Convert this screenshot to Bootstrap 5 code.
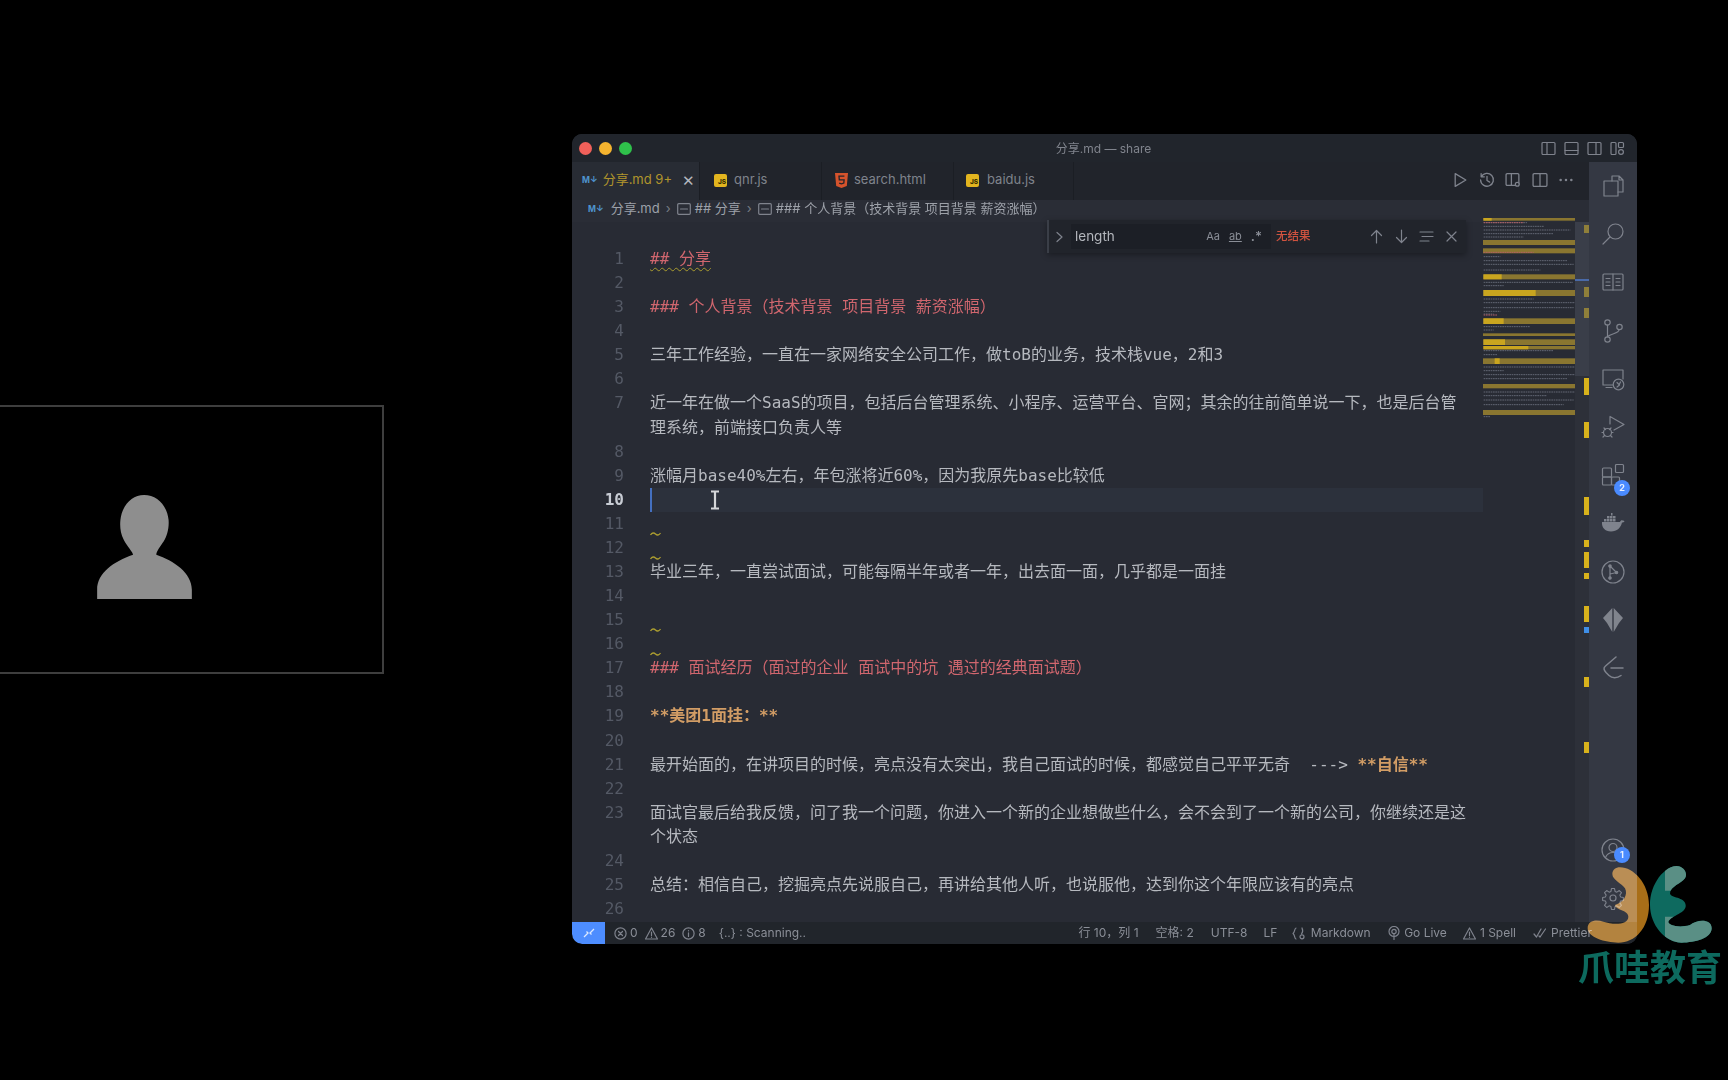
<!DOCTYPE html>
<html lang="zh-CN">
<head>
<meta charset="utf-8">
<title>分享.md — share</title>
<link rel="stylesheet" href="https://cdn.jsdelivr.net/npm/bootstrap@5.3.0/dist/css/bootstrap.min.css">
<style>
html,body{height:1080px;overflow:hidden;background:#000}
body{font-family:Inter,"Noto Sans CJK SC",sans-serif;width:1728px;position:relative}
.stage{height:1080px;margin-left:-96px}
.cam{width:480px;height:269px;margin-top:404.5px;border:2px solid #3e3e3e;padding-top:16px;flex:none}
.cam svg{width:95px;height:104px}
.win{width:1065px;height:810px;margin-top:134px;margin-left:188px;background:#282c34;border-radius:10px;overflow:hidden;flex:none;filter:blur(.45px);color:#8b8f98;font-size:13px}
.ttl{height:28px;background:#21252c;padding:1px 12px 0 7px;position:relative}
.dot{width:13px;height:13px;border-radius:50%;margin-right:7px}
.ttl-text{position:absolute;left:-2px;right:0;text-align:center;color:#80848d;font-size:12px}
.lay{gap:8px}
.ico{stroke:#7f838d;fill:none;stroke-width:1.2;stroke-linecap:round;stroke-linejoin:round}
.tabs{height:38px;background:#21242b}
.tabx{height:38px;border-right:1px solid #1b1e24;padding:0 0 2px 10px;color:#7f838c;font-size:13px;flex:none;white-space:nowrap}
.tabx.on{background:#282c34;color:#b1952c}
.tabx .close{color:#b4b7bd;font-size:15px;margin-left:10px;line-height:1}
.md{color:#4f94cf;font-size:8.5px;font-weight:700;line-height:1}
.jsi{width:13px;height:13px;background:#e3b51f;border-radius:2px;color:#3a3000;font-size:6.5px;font-weight:800;line-height:1;display:flex;align-items:flex-end;justify-content:flex-end;padding:0 1px 1px 0;flex:none}
.actions{gap:10.5px;padding:0 15px 2px 0}
.crumbs{height:22px;background:#2a2d36;padding:0 0 4px 16px;font-size:13px;color:#9da1a9;white-space:pre}
.crumbs .sep{margin:0 6px;color:#777b84}
.ed{height:700px;position:relative;background:#282b34}
.code{width:911px;padding-top:25px;overflow:hidden;font-family:"DejaVu Sans Mono","Noto Sans CJK SC",monospace;font-size:16px;line-height:24.08px;color:#b6b9bf;flex:none}
.ln{display:flex;white-space:pre;min-height:24.08px}
.num{width:52px;text-align:right;color:#545965;flex:none;margin-right:26px}
.cnt{flex:1 1 auto}
.rd{color:#d0666e}
.og{color:#d29d65;font-weight:700}
.cur{background:#2c313c;box-shadow:inset 2px 0 0 #4470c0}
.num.now{color:#c8ccd4;font-weight:700}
.squig{text-decoration:underline wavy #a89b2f 1px;text-underline-offset:3px}
.tild{display:block;width:11px;height:2px;margin-top:21px;overflow:visible}
.mini{width:92px;flex:none;margin-top:-4px;position:relative}
.mini svg,.ruler svg{display:block}
.ruler{width:14px;flex:none}
.find{position:absolute;left:475px;top:-2px;width:419px;height:33px;background:#21242b;border-left:2px solid #3a3e47;box-shadow:0 2px 6px rgba(0,0,0,.35);padding-left:6px;font-size:13.5px}
.fld{width:200px;height:25px;background:#1c1f26;margin-left:7px;color:#b4b7bd;padding:0 9px 0 4px;font-size:13.5px;flex:none}
.opt{font-size:11px;color:#8a8e97;margin-left:9px}
.regex{font-size:13px;font-weight:600;line-height:1}
.nores{color:#d0533f;font-size:11.5px;font-weight:500;margin-left:5px}
.ftools{margin-left:auto;padding-right:7px}
.ftools svg{margin-left:10px}
.actbar{width:48px;background:#343843;flex:none}
.ab{height:48.2px;width:48px;flex:none;position:relative}
.bdg{position:absolute;right:7px;top:29px;width:16px;height:16px;border-radius:50%;background:#4a8bff;color:#e8f0ff;font-size:9px;font-weight:700;text-align:center;line-height:16px}
.sbar{height:22px;background:#21252b;font-size:12px;color:#8b8f98;white-space:pre}
.rem{width:33px;height:22px;background:#4d8dff;border-bottom-left-radius:10px;flex:none}
.stl{margin-left:8px;gap:3px}
.stl .txt{margin-right:4px}
.str{margin-left:auto}
.logo{position:absolute;left:1575px;top:860px;width:150px;height:125px;mix-blend-mode:screen}
.logotext{position:absolute;left:1578px;top:946px;font-family:"Noto Sans CJK SC",sans-serif;font-size:36px;line-height:38px;font-weight:700;color:#0d6a5e;white-space:nowrap}
.beam{position:absolute;left:60px;top:2px}
.beamwrap{position:relative;display:block;height:24px}
</style>
</head>
<body>
<div class="stage d-flex align-items-start">
  <div class="cam d-flex justify-content-center align-items-center">
    <svg viewBox="290 315 285 313"><path fill="#8e8e8e" d="M290 628L290 600C290 550 340 515 398 495C398 488 380 470 370 450C360 430 358 410 360 390C365 345 395 315 431 315C470 315 500 345 505 390C507 415 500 440 490 455C480 470 468 485 468 495C520 512 575 550 575 600L575 628Z"/></svg>
  </div>
  <div class="win d-flex flex-column">
    <div class="ttl d-flex align-items-center">
      <span class="dot" style="background:#f0605a"></span>
      <span class="dot" style="background:#f5b42f"></span>
      <span class="dot" style="background:#2fc14b"></span>
      <div class="ttl-text">分享.md — share</div>
      <div class="lay d-flex ms-auto align-items-center" style="position:relative">
        <svg class="ico" width="15" height="15" viewBox="0 0 15 15"><rect x="1" y="1.5" width="13" height="12" rx="1"/><path d="M6 1.5v12"/></svg>
        <svg class="ico" width="15" height="15" viewBox="0 0 15 15"><rect x="1" y="1.5" width="13" height="12" rx="1"/><path d="M1 9.5h13"/></svg>
        <svg class="ico" width="15" height="15" viewBox="0 0 15 15"><rect x="1" y="1.5" width="13" height="12" rx="1"/><path d="M9 1.5v12"/></svg>
        <svg class="ico" width="15" height="15" viewBox="0 0 15 15"><rect x="1" y="1.5" width="5" height="12" rx="1"/><rect x="8.5" y="1.5" width="5" height="5" rx="1"/><circle cx="11" cy="11" r="2.4"/></svg>
      </div>
    </div>
    <div class="d-flex flex-grow-1" style="min-height:0">
      <div class="d-flex flex-column" style="width:1017px">
        <div class="tabs d-flex align-items-center">
          <div class="tabx on d-flex align-items-center" style="width:128px"><span class="md">M↓</span><span style="margin-left:5px">分享.md 9+</span><span class="close">✕</span></div>
          <div class="tabx d-flex align-items-center" style="width:122px;padding-left:14px"><span class="jsi">JS</span><span style="margin-left:7px">qnr.js</span></div>
          <div class="tabx d-flex align-items-center" style="width:132px;padding-left:13px"><svg width="13" height="15" viewBox="0 0 13 15"><path fill="#d5532c" d="M0 0h13l-1.200 13L6.500 15 1.200 13z"/><path fill="none" stroke="#21242b" stroke-width="1.300" d="M9.400 3.200H4l.3 3.600h4.800l-.3 3.300-2.300.8-2.300-.8"/></svg><span style="margin-left:6px">search.html</span></div>
          <div class="tabx d-flex align-items-center" style="width:120px;padding-left:12px"><span class="jsi">JS</span><span class="ms-2">baidu.js</span></div>
          <div class="actions d-flex ms-auto align-items-center">
            <svg class="ico" width="16" height="16" viewBox="0 0 15 15"><path d="M3 1.500l10 6-10 6z"/></svg>
            <svg class="ico" width="16" height="16" viewBox="0 0 15 15"><path d="M2.200 4.500A6 6 0 1 1 1.500 7.500M2 1.500v3h3M7.500 4v4l2.500 1.500"/></svg>
            <svg class="ico" width="16" height="16" viewBox="0 0 15 15"><rect x="1" y="1.500" width="12" height="11" rx="1"/><path d="M6 1.500v11"/><circle cx="11.500" cy="11.500" r="1.800" fill="#21242b"/></svg>
            <svg class="ico" width="16" height="16" viewBox="0 0 15 15"><rect x="1" y="1.500" width="13" height="12" rx="1"/><path d="M7.500 1.500v12"/></svg>
            <svg class="ico" width="16" height="16" viewBox="0 0 15 15"><circle cx="2.500" cy="7.500" r=".6"/><circle cx="7.500" cy="7.500" r=".6"/><circle cx="12.500" cy="7.500" r=".6"/></svg>
          </div>
        </div>
        <div class="crumbs d-flex align-items-center"><span class="md" style="margin-right:7px">M↓</span><span>分享.md</span><span class="sep">›</span><svg class="ico me-1" width="14" height="12" viewBox="0 0 14 12"><rect x=".7" y=".7" width="12.600" height="10.600" rx="1"/><path d="M3.500 6h7"/></svg><span>## 分享</span><span class="sep">›</span><svg class="ico me-1" width="14" height="12" viewBox="0 0 14 12"><rect x=".7" y=".7" width="12.600" height="10.600" rx="1"/><path d="M3.500 6h7"/></svg><span>### 个人背景（技术背景 项目背景 薪资涨幅）</span></div>
        <div class="ed d-flex">
          <div class="code">
            <div class="ln"><span class="num">1</span><span class="cnt rd"><span class="squig">## 分享</span></span></div>
            <div class="ln"><span class="num">2</span><span class="cnt"></span></div>
            <div class="ln"><span class="num">3</span><span class="cnt rd">### 个人背景（技术背景 项目背景 薪资涨幅）</span></div>
            <div class="ln"><span class="num">4</span><span class="cnt"></span></div>
            <div class="ln"><span class="num">5</span><span class="cnt">三年工作经验，一直在一家网络安全公司工作，做toB的业务，技术栈vue，2和3</span></div>
            <div class="ln"><span class="num">6</span><span class="cnt"></span></div>
            <div class="ln"><span class="num">7</span><span class="cnt">近一年在做一个SaaS的项目，包括后台管理系统、小程序、运营平台、官网；其余的往前简单说一下，也是后台管<br>理系统，前端接口负责人等</span></div>
            <div class="ln"><span class="num">8</span><span class="cnt"></span></div>
            <div class="ln"><span class="num">9</span><span class="cnt">涨幅月base40%左右，年包涨将近60%，因为我原先base比较低</span></div>
            <div class="ln"><span class="num now">10</span><span class="cnt cur"><span class="beamwrap"><svg class="beam" width="10" height="20" viewBox="0 0 10 20"><path fill="none" stroke="#d4d6d9" stroke-width="2.200" d="M1 1.500h8M5 1.500v17M1 18.500h8"/></svg></span></span></div>
            <div class="ln"><span class="num">11</span><span class="cnt"><svg class="tild" viewBox="0 0 11 2"><path fill="none" stroke="#ab9d30" stroke-width="1.300" d="M.5 2C2 -.5 4 -.5 5.500 1S9 2.500 10.500 0"/></svg></span></div>
            <div class="ln"><span class="num">12</span><span class="cnt"><svg class="tild" viewBox="0 0 11 2"><path fill="none" stroke="#ab9d30" stroke-width="1.300" d="M.5 2C2 -.5 4 -.5 5.500 1S9 2.500 10.500 0"/></svg></span></div>
            <div class="ln"><span class="num">13</span><span class="cnt">毕业三年，一直尝试面试，可能每隔半年或者一年，出去面一面，几乎都是一面挂</span></div>
            <div class="ln"><span class="num">14</span><span class="cnt"></span></div>
            <div class="ln"><span class="num">15</span><span class="cnt"><svg class="tild" viewBox="0 0 11 2"><path fill="none" stroke="#ab9d30" stroke-width="1.300" d="M.5 2C2 -.5 4 -.5 5.500 1S9 2.500 10.500 0"/></svg></span></div>
            <div class="ln"><span class="num">16</span><span class="cnt"><svg class="tild" viewBox="0 0 11 2"><path fill="none" stroke="#ab9d30" stroke-width="1.300" d="M.5 2C2 -.5 4 -.5 5.500 1S9 2.500 10.500 0"/></svg></span></div>
            <div class="ln"><span class="num">17</span><span class="cnt rd">### 面试经历（面过的企业 面试中的坑 遇过的经典面试题）</span></div>
            <div class="ln"><span class="num">18</span><span class="cnt"></span></div>
            <div class="ln"><span class="num">19</span><span class="cnt og">**美团1面挂：**</span></div>
            <div class="ln"><span class="num">20</span><span class="cnt"></span></div>
            <div class="ln"><span class="num">21</span><span class="cnt">最开始面的，在讲项目的时候，亮点没有太突出，我自己面试的时候，都感觉自己平平无奇  ---&gt; <span class="og">**自信**</span></span></div>
            <div class="ln"><span class="num">22</span><span class="cnt"></span></div>
            <div class="ln"><span class="num">23</span><span class="cnt">面试官最后给我反馈，问了我一个问题，你进入一个新的企业想做些什么，会不会到了一个新的公司，你继续还是这<br>个状态</span></div>
            <div class="ln"><span class="num">24</span><span class="cnt"></span></div>
            <div class="ln"><span class="num">25</span><span class="cnt">总结：相信自己，挖掘亮点先说服自己，再讲给其他人听，也说服他，达到你这个年限应该有的亮点</span></div>
            <div class="ln"><span class="num">26</span><span class="cnt"></span></div>
          </div>
          <div class="mini">
            <svg width="92" height="200" viewBox="0 0 276 600">
              <g fill="#8a7630"><rect y="0" width="276" height="8"/><rect y="66" width="276" height="15"/><rect y="91" width="276" height="15"/><rect y="169" width="276" height="15"/><rect y="216" width="276" height="18"/><rect y="301" width="276" height="17"/><rect y="346" width="276" height="8"/><rect y="364" width="276" height="17"/><rect y="384" width="276" height="10"/><rect y="421" width="276" height="17"/><rect y="498" width="276" height="13"/><rect y="576" width="276" height="15"/></g>
              <g fill="#c9a51f"><rect x="2" y="0" width="24" height="8"/><rect x="2" y="169" width="54" height="15"/><rect x="2" y="216" width="156" height="18"/><rect x="2" y="301" width="60" height="17"/><rect x="2" y="364" width="64" height="17"/><rect x="2" y="384" width="134" height="10"/><rect x="35" y="421" width="15" height="17"/></g>
              <g stroke="#626773" stroke-width="3" stroke-dasharray="5 2" fill="none"><path d="M2 14h130M2 25h180M2 36h260M2 47h210M2 57h120M2 116h50M2 128h250M2 139h270M2 156h170M2 193h268M2 203h60M2 243h150M2 254h274M2 269h270M2 280h50M2 288h30M2 326h140M2 336h30M2 398h210M2 410h40M2 447h274M2 458h60M2 470h274M2 482h250M2 522h274M2 533h190M2 546h270M2 560h240M2 596h20"/></g>
              <g stroke="#b05e64" stroke-width="3" stroke-dasharray="5 2" fill="none"><path d="M2 14h120M2 103h150M2 291h40"/></g>
            </svg>
          </div>
          <div class="ruler">
            <svg width="14" height="700" viewBox="0 0 14 700">
              <rect width="14" height="700" fill="#2d3039"/><rect y="0" width="14" height="154" fill="#3a3e49"/><rect y="57" width="14" height="2" fill="#4a6aa8"/>
              <g fill="#8f7f3a"><rect x="9" y="3" width="5" height="8"/><rect x="9" y="65" width="5" height="10"/><rect x="9" y="86" width="5" height="10"/></g>
              <g fill="#d8b21c"><rect x="9" y="156" width="5" height="17"/><rect x="9" y="200" width="5" height="16"/><rect x="9" y="275" width="5" height="18"/><rect x="9" y="318" width="5" height="7"/><rect x="9" y="330" width="5" height="16"/><rect x="9" y="351" width="5" height="6"/><rect x="9" y="384" width="5" height="16"/><rect x="9" y="455" width="5" height="10"/><rect x="9" y="520" width="5" height="11"/></g>
              <rect x="9" y="405" width="5" height="6" fill="#3f8fe8"/>
            </svg>
          </div>
          <div class="find d-flex align-items-center">
            <svg class="ico" width="9" height="12" viewBox="0 0 9 12"><path d="M2 1.500l5 4.500-5 4.500"/></svg>
            <div class="fld d-flex align-items-center"><span>length</span><span class="opt ms-auto">Aa</span><span class="opt text-decoration-underline">ab</span><span class="opt regex">.*</span></div>
            <span class="nores">无结果</span>
            <div class="ftools d-flex align-items-center">
              <svg class="ico" width="15" height="15" viewBox="0 0 15 15"><path d="M7.500 14V1.500M2.500 6.500l5-5 5 5"/></svg>
              <svg class="ico" width="15" height="15" viewBox="0 0 15 15"><path d="M7.500 1v12.500M2.500 8.500l5 5 5-5"/></svg>
              <svg class="ico" width="15" height="15" viewBox="0 0 15 15"><path d="M1 3h13M3 7.500h11M1 12h9"/></svg>
              <svg class="ico" width="15" height="15" viewBox="0 0 15 15"><path d="M3 3l9 9M12 3l-9 9"/></svg>
            </div>
          </div>
        </div>
      </div>
      <div class="actbar d-flex flex-column">
        <div class="ab d-flex align-items-center justify-content-center"><svg class="ico" width="24" height="24" viewBox="0 0 24 24"><path d="M11 2h7l4 4v12h-5M11 2v5M18 2v4h4"/><path d="M8 7h9v15H3V7h5z"/></svg></div>
        <div class="ab d-flex align-items-center justify-content-center"><svg class="ico" width="24" height="24" viewBox="0 0 24 24"><circle cx="14.500" cy="9.500" r="7.500"/><path d="M9 15l-7 7"/></svg></div>
        <div class="ab d-flex align-items-center justify-content-center"><svg class="ico" width="24" height="24" viewBox="0 0 24 24"><rect x="2" y="4" width="20" height="16" rx="1"/><path d="M12 4v16M5 8.500h4M5 12h4M5 15.500h4M15 8.500h4M15 12h4M15 15.500h4"/></svg></div>
        <div class="ab d-flex align-items-center justify-content-center"><svg class="ico" width="24" height="24" viewBox="0 0 24 24"><circle cx="6.500" cy="3.500" r="2.700"/><circle cx="6.500" cy="20.500" r="2.700"/><circle cx="18.500" cy="8" r="2.700"/><path d="M6.500 6.200v11.600M18 10.700c0 4-8 3.500-11.500 7"/></svg></div>
        <div class="ab d-flex align-items-center justify-content-center"><svg class="ico" width="24" height="24" viewBox="0 0 24 24"><path d="M12 18H2V3h20v9M5 20.500h6"/><circle cx="17.500" cy="17.500" r="5.300"/><path d="M16 15.500l2.500 2.500-2.500 2M19.500 15l-1 2"/></svg></div>
        <div class="ab d-flex align-items-center justify-content-center"><svg class="ico" width="24" height="24" viewBox="0 0 24 24"><path d="M9 1.500L23 9.500l-10 5.500M9 1.500V9"/><circle cx="6.500" cy="17.500" r="4"/><path d="M3 13l1.500 1.500M10 13l-1.500 1.500M1 17.500h1.500M10.500 17.500H12M2 22l1.500-1.500M11 22l-1.500-1.500"/></svg></div>
        <div class="ab d-flex align-items-center justify-content-center"><svg class="ico" width="24" height="24" viewBox="0 0 24 24"><rect x="1.500" y="5" width="9" height="9" rx="1"/><rect x="1.500" y="14" width="9" height="8" rx="1"/><rect x="10.500" y="14" width="8" height="8" rx="1"/><rect x="14.500" y="1.500" width="8" height="8" rx="1"/></svg><span class="bdg">2</span></div>
        <div class="ab d-flex align-items-center justify-content-center"><svg width="24" height="20" viewBox="0 0 24 20"><path fill="#7f838d" d="M1 9h18c.5-1.500 1.800-2 2.500-1.500.8-.2 1.500 0 2 .7-.7 1-1.500 1.300-2.500 1.300-1 5-5 9-11 9C4 18.500 .5 14.500 1 9zM3 6h2.500v2.500H3zM6 6h2.500v2.500H6zM9 6h2.500v2.500H9zM12 6h2.500v2.500H12zM6 3h2.500v2.500H6zM9 3h2.500v2.500H9zM12 3h2.500v2.500H12zM10 0h1.500v2.500H10z"/></svg></div>
        <div class="ab d-flex align-items-center justify-content-center"><svg class="ico" width="24" height="24" viewBox="0 0 24 24"><circle cx="12" cy="12" r="11"/><path d="M9 6l6.500 6.500M9 6v12M9 14l6.500-1.500"/><circle cx="9" cy="6" r="1.200" fill="#7f838d"/><circle cx="9" cy="18" r="1.200" fill="#7f838d"/><circle cx="15.500" cy="12.500" r="1.200" fill="#7f838d"/></svg></div>
        <div class="ab d-flex align-items-center justify-content-center"><svg width="24" height="26" viewBox="0 0 24 26"><path fill="#80848d" d="M11.300 1L2 11l4 5 5.300 9zM12.700 1L22 11l-4 5-5.300 9z"/></svg></div>
        <div class="ab d-flex align-items-center justify-content-center"><svg class="ico" width="24" height="26" viewBox="0 0 24 26" style="stroke-width:1.500"><path d="M15 2L4.500 11C2 13 3 15 5 17.500L8 20.500C11 23.500 16 23.500 20 20.500M10 13H22"/></svg></div>
        <div class="mt-auto"></div>
        <div class="ab d-flex align-items-center justify-content-center"><svg class="ico" width="24" height="24" viewBox="0 0 24 24"><circle cx="12" cy="12" r="11"/><circle cx="12" cy="9.500" r="4"/><path d="M4.500 19.500c1.500-3.500 4-5 7.500-5s6 1.500 7.500 5"/></svg><span class="bdg" style="top:21px">1</span></div>
        <div class="ab d-flex align-items-center justify-content-center"><svg class="ico" width="24" height="24" viewBox="0 0 24 24"><circle cx="12" cy="12" r="3"/><path d="M10.300 1.500h3.400l.6 3.200 2 .8 2.700-1.800 2.400 2.400-1.800 2.700.8 2 3.100.6v3.400l-3.100.6-.8 2 1.800 2.700-2.400 2.400-2.700-1.800-2 .8-.6 3.200h-3.400l-.6-3.200-2-.8-2.700 1.800-2.400-2.400 1.800-2.700-.8-2-3.100-.6v-3.400l3.100-.6.8-2-1.800-2.700 2.400-2.400 2.700 1.800 2-.8z" transform="translate(1.200 1.200) scale(.9)"/></svg></div>
      </div>
    </div>
    <div class="sbar d-flex align-items-center">
      <div class="rem d-flex align-items-center justify-content-center"><svg width="14" height="14" viewBox="0 0 14 14" fill="none" stroke="#dbe8ff" stroke-width="1.300"><path d="M2 11l4-4-1.500-1.500M12 3L8 7l1.500 1.500"/></svg></div>
      <div class="stl d-flex align-items-center">
        <svg class="ico" width="13" height="13" viewBox="0 0 13 13" style="margin-left:1px"><circle cx="6.500" cy="6.500" r="5.600"/><path d="M4.500 4.500l4 4M8.500 4.500l-4 4"/></svg><span class="txt">0</span>
        <svg class="ico" width="13" height="13" viewBox="0 0 13 13"><path d="M6.500 1L12.500 12H.5z"/><path d="M6.500 5v3.500M6.500 10v.3"/></svg><span class="txt">26</span>
        <svg class="ico" width="13" height="13" viewBox="0 0 13 13"><circle cx="6.500" cy="6.500" r="5.600"/><path d="M6.500 5.800v3.700M6.500 3.500v.3"/></svg><span class="txt">8</span>
        <span style="margin-left:6px">{..} : Scanning..</span>
      </div>
      <div class="str d-flex align-items-center">
        <span>行 10，列 1</span>
        <span style="margin-left:17px">空格: 2</span>
        <span style="margin-left:17px">UTF-8</span>
        <span style="margin-left:16px">LF</span>
        <span style="margin-left:14.500px" class="d-inline-flex align-items-center"><svg class="ico me-1" width="15" height="13" viewBox="0 0 15 13"><path d="M4 1C2.500 1 3 5 1 6.500 3 8 2.500 12 4 12M10 1c1 2 1 4-.5 6"/><circle cx="10" cy="9.800" r="2"/></svg>Markdown</span>
        <span style="margin-left:17.500px" class="d-inline-flex align-items-center"><svg class="ico me-1" width="12" height="14" viewBox="0 0 12 14"><circle cx="6" cy="5.500" r="5"/><circle cx="6" cy="5.500" r="2.200"/><path d="M6 8v5.500"/></svg>Go Live</span>
        <span style="margin-left:16px" class="d-inline-flex align-items-center"><svg class="ico me-1" width="13" height="13" viewBox="0 0 13 13"><path d="M6.500 1L12.500 12H.5z"/><path d="M6.500 5v3.500M6.500 10v.3"/></svg>1 Spell</span>
        <span style="margin-left:17px;width:104px" class="d-inline-flex align-items-center"><svg class="ico me-1" width="14" height="12" viewBox="0 0 14 12"><path d="M1 7l2.500 3L8 2M6 9l1 1 5.500-8"/></svg>Prettier</span>
      </div>
    </div>
  </div>
</div>
<svg class="logo" viewBox="0 0 450 375">
  <defs>
    <clipPath id="ct"><rect x="270" y="0" width="180" height="92"/><rect x="270" y="170" width="180" height="90"/></clipPath>
  </defs>
  <path fill="#a86e18" d="M135 22C175 22 222 70 222 135C222 205 180 248 130 248C90 248 38 232 38 205C38 180 65 178 85 185C115 195 160 195 160 170C160 150 120 150 120 135C145 128 160 105 150 85C140 70 112 60 112 42C112 30 122 22 135 22Z"/>
  <path fill="#0e6a5f" d="M305 18C325 18 340 40 330 55C320 70 285 80 285 100C285 115 330 110 332 135C335 160 290 165 280 185C280 195 310 205 345 195C365 178 410 175 410 205C410 235 360 248 320 248C270 248 225 195 225 135C225 70 270 18 305 18Z"/>
  <path clip-path="url(#ct)" fill="#5a8f85" d="M305 18C325 18 340 40 330 55C320 70 285 80 285 100C285 115 330 110 332 135C335 160 290 165 280 185C280 195 310 205 345 195C365 178 410 175 410 205C410 235 360 248 320 248C270 248 225 195 225 135C225 70 270 18 305 18Z"/>
</svg>
<div class="logotext">爪哇教育</div>
</body>
</html>
